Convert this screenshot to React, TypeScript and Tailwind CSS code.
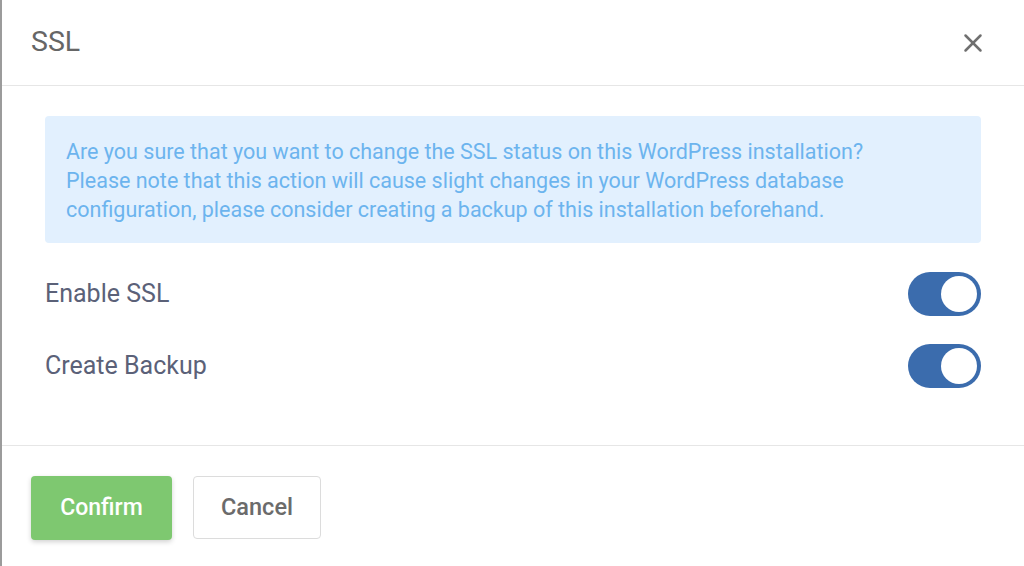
import { X } from "lucide-react";

function Toggle() {
  return (
    <div className="flex h-[44px] w-[73px] items-center justify-end rounded-full bg-[#3b6cad] p-[4px]">
      <div className="h-[36px] w-[36px] rounded-full bg-white" />
    </div>
  );
}

function Row({ label }: { label: string }) {
  return (
    <div className="flex items-center justify-between">
      <span className="text-[25px] text-[#5b6178]">{label}</span>
      <Toggle />
    </div>
  );
}

export default function App() {
  return (
    <div
      className="flex h-[566px] w-[1024px] flex-col border-l-2 border-[#9b9b9b] bg-white"
      style={{ fontFamily: "Roboto, 'Liberation Sans', sans-serif" }}
    >
      <div className="flex h-[86px] items-center justify-between border-b border-[#e6e6e6] pl-[29px] pr-[36px]">
        <span className="text-[28.5px] text-[#666666]">SSL</span>
        <X className="h-[30px] w-[30px] text-[#707070]" strokeWidth={2} />
      </div>

      <div className="flex flex-col px-[43px] pt-[30px] pb-[57px]">
        <div className="rounded-[4px] bg-[#e2f0fe] px-[21px] pt-[21px] pb-[19px] text-[21.5px] leading-[29px] text-[#6cb4ee]">
          Are you sure that you want to change the SSL status on this WordPress installation?
          <br />
          Please note that this action will cause slight changes in your WordPress database
          <br />
          configuration, please consider creating a backup of this installation beforehand.
        </div>
        <div className="mt-[29px] flex flex-col gap-[28px]">
          <Row label="Enable SSL" />
          <Row label="Create Backup" />
        </div>
      </div>

      <div className="flex flex-1 items-start gap-[21px] border-t border-[#e6e6e6] pl-[29px] pt-[30px]">
        <button className="h-[64px] w-[141px] rounded-[4px] bg-[#7ec870] text-[23px] font-medium text-white shadow-[0_2px_5px_rgba(0,0,0,0.18)]">
          Confirm
        </button>
        <button className="h-[63px] w-[128px] rounded-[4px] border border-[#dcdcdc] bg-white text-[23.5px] font-medium text-[#6b6b6b]">
          Cancel
        </button>
      </div>
    </div>
  );
}
